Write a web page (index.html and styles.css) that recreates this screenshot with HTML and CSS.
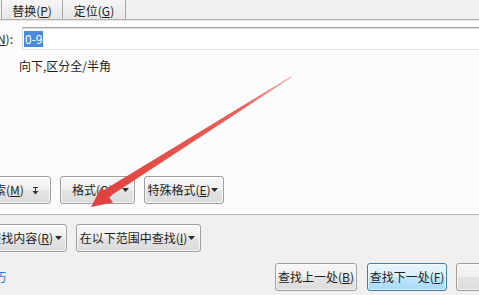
FILE: index.html
```html
<!DOCTYPE html>
<html lang="zh-CN">
<head>
<meta charset="utf-8">
<title>查找和替换</title>
<link rel="stylesheet" href="styles.css">
</head>
<body>
<div class="dialog">
  <div class="tabs">
    <div class="tab">替换(<u>P</u>)</div>
    <div class="tab tab-second">定位(<u>G</u>)</div>
  </div>

  <div class="panel">
    <div class="find-row">
      <label class="find-label">查找内容(<u>N</u>):</label>
      <div class="input"><span class="sel">0-9</span></div>
    </div>
    <div class="hint">向下,区分全/半角</div>

    <div class="btn-row row-top">
      <button class="btn btn-adv">
        <span class="lbl">高级搜索(<u>M</u>)</span>
        <svg class="adv-icon" width="7" height="9" viewBox="0 0 7 9"><path d="M1 1.5H6" stroke="#333" stroke-width="1"/><path d="M3.5 1.5V5" stroke="#333" stroke-width="1"/><path d="M0.5 5H6.5L3.5 8.5Z" fill="#333"/></svg>
      </button>
      <button class="btn btn-fmt">
        <span class="lbl">格式(<u>O</u>)</span>
        <svg class="caret" width="7" height="4" viewBox="0 0 7 4"><path d="M0 0H7L3.5 4Z"/></svg>
      </button>
      <button class="btn btn-special">
        <span class="lbl">特殊格式(<u>E</u>)</span>
        <svg class="caret" width="7" height="4" viewBox="0 0 7 4"><path d="M0 0H7L3.5 4Z"/></svg>
      </button>
    </div>
  </div>

  <div class="lower">
    <div class="btn-row row-mid">
      <button class="btn btn-highlight">
        <span class="lbl">突出显示查找内容(<u>R</u>)</span>
        <svg class="caret" width="7" height="4" viewBox="0 0 7 4"><path d="M0 0H7L3.5 4Z"/></svg>
      </button>
      <button class="btn btn-range">
        <span class="lbl">在以下范围中查找(<u>I</u>)</span>
        <svg class="caret" width="7" height="4" viewBox="0 0 7 4"><path d="M0 0H7L3.5 4Z"/></svg>
      </button>
    </div>

    <div class="bottom-row">
      <a class="tips">操作技巧</a>
      <div class="actions">
        <button class="btn btn-act">查找上一处(<u>B</u>)</button>
        <button class="btn btn-act btn-default">查找下一处(<u>F</u>)</button>
        <button class="btn btn-act">关闭</button>
      </div>
    </div>
  </div>
</div>

<svg class="arrow" width="479" height="295" viewBox="0 0 479 295">
  <defs>
    <linearGradient id="shaft" x1="291" y1="77" x2="100" y2="200" gradientUnits="userSpaceOnUse">
      <stop offset="0" stop-color="#f3b3b0"/>
      <stop offset="0.25" stop-color="#e8625c"/>
      <stop offset="1" stop-color="#e0413b"/>
    </linearGradient>
  </defs>
  <polygon points="290.7,76.5 291.3,77.5 106.4,198.6 101.6,191.4" fill="url(#shaft)"/>
  <polygon points="91,207 101.5,187 113,202.5" fill="#df433d"/>
</svg>
</body>
</html>
```
FILE: styles.css
```css
* {
  box-sizing: border-box;
  margin: 0;
  padding: 0;
}

html,
body {
  width: 479px;
  height: 295px;
  overflow: hidden;
}

body {
  position: relative;
  background: #f0f0f0;
  font-family: "Noto Sans CJK SC", "Microsoft YaHei", sans-serif;
  font-size: 12px;
  color: #1e1e1e;
}

u {
  text-decoration: underline;
  text-underline-offset: 1px;
}

.dialog {
  display: flex;
  flex-direction: column;
  height: 295px;
}

/* tabs */
.tabs {
  display: flex;
  height: 19px;
  padding-left: 1px;
}

.tab {
  width: 62px;
  height: 19px;
  padding-top: 2px;
  border-left: 1px solid #a8a8a8;
  border-right: 1px solid #a8a8a8;
  background: linear-gradient(#f5f5f5, #e7e7e7);
  display: flex;
  align-items: center;
  justify-content: center;
  line-height: 1;
  color: #222;
}

.tab-second {
  border-left: none;
  width: 63px;
}

/* panel */
.panel {
  display: flex;
  flex-direction: column;
  height: 196px;
  padding: 7px 0 10px;
  background: #fcfcfc;
  border-top: 1px solid #b2b2b2;
  border-bottom: 1px solid #bdbdbd;
  box-shadow: inset 0 1px 0 #e4e4e4;
}

.find-row {
  display: flex;
  align-items: center;
  gap: 9px;
  height: 23px;
}

.find-label {
  flex: none;
  width: 70px;
  margin-left: -57px;
  text-align: right;
  line-height: 16px;
}

.input {
  flex: 1;
  height: 23px;
  margin-right: -20px;
  background: #fff;
  border-top: 1px solid #a4a4a4;
  border-left: 1px solid #d8d8d8;
  border-right: 1px solid #d8d8d8;
  border-bottom: 1px solid #e2e2e2;
  box-shadow: inset 0 1px 0 #dedede;
  display: flex;
  align-items: center;
  padding-left: 1px;
}

.sel {
  display: block;
  height: 16px;
  line-height: 16px;
  padding: 0 1px;
  background: #4a8adb;
  color: #fff;
}

.hint {
  margin: 8px 0 0 19px;
  line-height: 16px;
}

/* buttons */
.btn-row {
  display: flex;
  gap: 9px;
}

.row-top {
  margin-top: auto;
}

.btn {
  flex: none;
  display: flex;
  align-items: center;
  height: 28px;
  padding: 0 5px 0 2px;
  font: inherit;
  color: #1e1e1e;
  background: linear-gradient(#f7f7f7 0%, #efefef 48%, #e3e3e3 52%, #dcdcdc 100%);
  border: 1px solid #9e9e9e;
  border-radius: 3px;
  box-shadow: inset 0 0 0 1px rgba(255, 255, 255, 0.7);
  line-height: 16px;
}

.lbl {
  flex: 1;
  text-align: center;
  white-space: nowrap;
}

.caret {
  flex: none;
  fill: #2a2a2a;
}

.btn-adv {
  width: 96px;
  margin-left: -45px;
  padding-right: 18px;
}

.adv-icon {
  flex: none;
  margin-left: 8px;
}

.btn-fmt {
  width: 75px;
}

.btn-special {
  width: 80px;
}

/* lower section */
.lower {
  flex: 1;
  display: flex;
  flex-direction: column;
  padding-top: 8px;
  border-top: 1px solid #e8e8e8;
}

.btn-highlight {
  width: 151px;
  margin-left: -84px;
  padding-right: 4px;
}

.btn-highlight .lbl {
  text-align: right;
  padding-right: 2px;
}

.btn-range {
  width: 125px;
}

.bottom-row {
  display: flex;
  align-items: center;
  margin-top: 11px;
  margin-right: -57px;
}

.tips {
  margin-left: -42px;
  color: #3a76c8;
  line-height: 16px;
  white-space: nowrap;
}

.actions {
  margin-left: auto;
  display: flex;
  gap: 9px;
}

.btn-act {
  justify-content: center;
  padding: 0;
  width: 80px;
}

.btn-act:first-child {
  width: 82px;
  margin-right: 1px;
}

.btn-default {
  background: linear-gradient(#e8f5fc 0%, #d9f0fc 48%, #bee6fd 52%, #a7d9f5 100%);
  border-color: #3c7fb1;
  box-shadow: inset 0 0 0 1px rgba(255, 255, 255, 0.6);
}

/* annotation arrow */
.arrow {
  position: absolute;
  left: 0;
  top: 0;
  pointer-events: none;
}
```
